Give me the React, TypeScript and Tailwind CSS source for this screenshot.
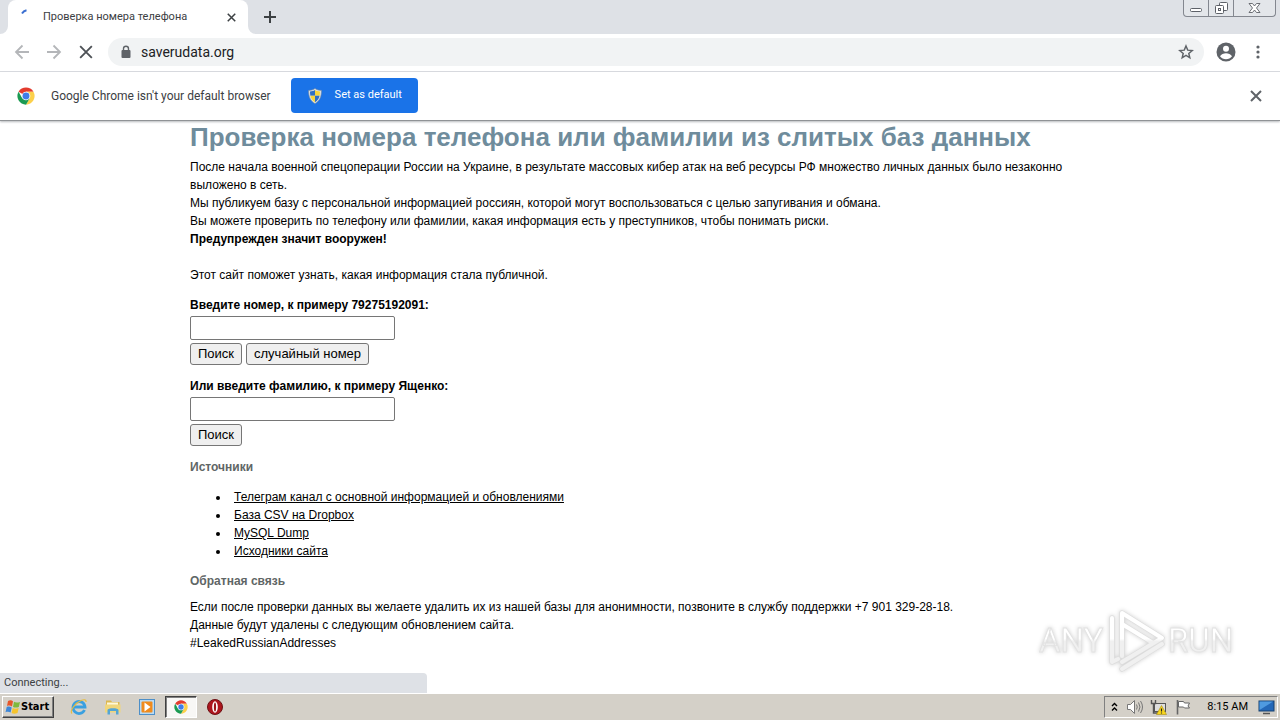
import React from "react";

const SOURCES = [
  "Телеграм канал с основной информацией и обновлениями",
  "База CSV на Dropbox",
  "MySQL Dump",
  "Исходники сайта",
];

const UI_FONT = "font-['Roboto','DejaVu_Sans',sans-serif]";

function ChromeLogo({ size }: { size: number }) {
  return (
    <svg width={size} height={size} viewBox="0 0 48 48" aria-hidden="true">
      <path d="M24 24L4.100 12.500A23 23 0 0 1 43.900 12.500H24z" fill="#e33b2e" />
      <path d="M24 12.500h19.900A23 23 0 0 1 24 47l10-17.200z" fill="#fcd04b" />
      <path d="M4.100 12.500L14 29.800 34 29.800 24 47A23 23 0 0 1 4.100 12.500z" fill="#1b9a52" />
      <circle cx="24" cy="24" r="11.5" fill="#fff" />
      <circle cx="24" cy="24" r="9.300" fill="#3f7de8" />
    </svg>
  );
}

function CloseIcon({ size, width = 2, color = "#5f6368" }: { size: number; width?: number; color?: string }) {
  return (
    <svg width={size} height={size} viewBox="0 0 12 12" stroke={color} strokeWidth={width} aria-hidden="true">
      <path d="M1 1l10 10M11 1L1 11" />
    </svg>
  );
}

function ShieldIcon() {
  return (
    <svg width="16" height="16" viewBox="0 0 16 16" aria-hidden="true">
      <path d="M8 0.500C10 2 12 2.400 14.400 2.400c0 6-1.400 10.200-6.400 13.100C3 12.600 1.600 8.400 1.600 2.400 4 2.400 6 2 8 .5z" fill="#dfe5ea" stroke="#7d8b99" strokeWidth="0.6" />
      <path d="M8 2C6.400 3 5 3.400 3 3.500c0 1.700.1 3 .4 4.300H8z" fill="#2f6fc4" />
      <path d="M8 2c1.600 1 3 1.400 5 1.500 0 1.700-.1 3-.4 4.300H8z" fill="#f8d53a" />
      <path d="M3.400 7.800C4 10.600 5.500 12.700 8 14.200V7.800z" fill="#f8d53a" />
      <path d="M12.600 7.800c-.6 2.800-2.100 4.900-4.600 6.400V7.800z" fill="#2f6fc4" />
    </svg>
  );
}

function TabStrip() {
  return (
    <div className="relative flex h-[34px] items-stretch bg-[#dee1e6] pl-2">
      <div className="relative flex w-60 items-center rounded-t-lg bg-white pr-2 pl-3">
        <svg className="absolute bottom-0 -left-2" width="8" height="8" aria-hidden="true">
          <path d="M8 0v8H0a8 8 0 0 0 8-8z" fill="#fff" />
        </svg>
        <svg className="absolute -right-2 bottom-0" width="8" height="8" aria-hidden="true">
          <path d="M0 0v8h8a8 8 0 0 1-8-8z" fill="#fff" />
        </svg>
        <svg width="16" height="16" viewBox="0 0 16 16" fill="none" aria-hidden="true">
          <path d="M2 4.500A7 7 0 0 1 6.500 1.300" stroke="#3b6fd1" strokeWidth="2" />
        </svg>
        <span className="ml-[7px] flex-1 text-[11px] whitespace-nowrap text-[#3c4043]">Проверка номера телефона</span>
        <button type="button" aria-label="Close tab" className="p-1">
          <CloseIcon size={9} width={2} color="#3c4043" />
        </button>
      </div>
      <button type="button" aria-label="New tab" className="ml-4 flex items-center">
        <svg width="12" height="34" viewBox="0 0 12 34" stroke="#3c4043" strokeWidth="2" aria-hidden="true">
          <path d="M6 11v12M0 17h12" />
        </svg>
      </button>
      <div className="mr-1 ml-auto flex h-[17px] overflow-hidden rounded-b border border-t-0 border-[#83878f] bg-[#e3e6ea]">
        <button type="button" aria-label="Minimize" className="flex w-[25px] items-center justify-center border-r border-[#83878f]">
          <svg width="12" height="16" viewBox="0 0 12 16" fill="#fff" stroke="#5d6168" aria-hidden="true">
            <rect x="0.5" y="8.500" width="11" height="3" rx="1" />
          </svg>
        </button>
        <button type="button" aria-label="Restore" className="flex w-[25px] items-center justify-center border-r border-[#83878f]">
          <svg width="13" height="16" viewBox="0 0 13 16" fill="#fff" stroke="#5d6168" aria-hidden="true">
            <rect x="4.500" y="2.500" width="8" height="8" rx="1" />
            <rect x="0.500" y="5.500" width="8" height="8" rx="1" />
            <rect x="3.500" y="8.500" width="2" height="2" />
          </svg>
        </button>
        <button type="button" aria-label="Close window" className="flex w-[41px] items-center justify-center">
          <svg width="13" height="16" viewBox="0 0 13 16" fill="#fff" stroke="#5d6168" strokeWidth="0.900" aria-hidden="true">
            <path d="M1 3.500h3.500l2 2.500 2-2.500H12L8.500 8l3.500 4.500H8.500l-2-2.500-2 2.500H1L4.500 8z" />
          </svg>
        </button>
      </div>
    </div>
  );
}

function Toolbar() {
  return (
    <div className="flex h-[38px] items-center border-b border-[#dadce0] bg-white pr-5 pb-px pl-3.5">
      <button type="button" aria-label="Back" className="mr-4">
        <svg width="16" height="16" viewBox="0 0 16 16" fill="none" stroke="#b4b6b9" strokeWidth="1.800" aria-hidden="true">
          <path d="M15 8H2M8.500 1.500L2 8l6.500 6.500" />
        </svg>
      </button>
      <button type="button" aria-label="Forward" className="mr-4">
        <svg width="16" height="16" viewBox="0 0 16 16" fill="none" stroke="#b4b6b9" strokeWidth="1.800" aria-hidden="true">
          <path d="M1 8h13M7.500 1.500L14 8l-6.500 6.500" />
        </svg>
      </button>
      <button type="button" aria-label="Stop loading" className="mr-3.5 flex w-4 justify-center">
        <CloseIcon size={14} width={1.6} color="#4d5156" />
      </button>
      <div className="flex h-7 flex-1 items-center rounded-full bg-[#f1f3f4] pr-2.5 pl-3">
        <svg width="12" height="14" viewBox="0 0 12 14" aria-hidden="true">
          <rect x="1.500" y="5" width="9" height="8" rx="1" fill="#5f6368" />
          <path d="M3.500 5.500V3.700a2.500 2.500 0 0 1 5 0v1.800" fill="none" stroke="#5f6368" strokeWidth="1.400" />
        </svg>
        <input
          type="text"
          aria-label="Address"
          defaultValue="saverudata.org"
          className="ml-[9px] min-w-0 flex-1 bg-transparent text-sm text-[#202124] outline-none"
        />
        <button type="button" aria-label="Bookmark this page">
          <svg width="16" height="16" viewBox="0 0 24 24" fill="none" stroke="#5f6368" strokeWidth="2.200" aria-hidden="true">
            <path d="M12 3l2.600 6.200 6.700.6-5.100 4.400 1.500 6.500L12 17.200l-5.700 3.500 1.500-6.500-5.100-4.400 6.700-.6z" />
          </svg>
        </button>
      </div>
      <button type="button" aria-label="Profile" className="ml-3">
        <svg width="20" height="20" viewBox="0 0 20 20" aria-hidden="true">
          <circle cx="10" cy="10" r="9.500" fill="#5f6368" />
          <circle cx="10" cy="6.800" r="3" fill="#fff" />
          <path d="M4 14.200c1.100-1.900 3.700-2.900 6-2.900s4.900 1 6 2.900a7.300 7.300 0 0 1-12 0z" fill="#fff" />
        </svg>
      </button>
      <button type="button" aria-label="Menu" className="ml-5">
        <svg width="4" height="16" viewBox="0 0 4 16" fill="#5f6368" aria-hidden="true">
          <circle cx="2" cy="3" r="1.600" />
          <circle cx="2" cy="8" r="1.600" />
          <circle cx="2" cy="13" r="1.600" />
        </svg>
      </button>
    </div>
  );
}

function InfoBar() {
  return (
    <div className="relative z-10 flex h-[49px] items-center border-b border-[#909396] bg-white pr-[18px] pb-px pl-[17px] shadow-[0_1px_2px_#b8babd]">
      <ChromeLogo size={18} />
      <span className="ml-4 text-[12px] whitespace-nowrap text-[#3c4043]">Google Chrome isn't your default browser</span>
      <button type="button" className="ml-5 flex h-[35px] items-center rounded bg-[#1a73e8] px-4 text-[11px] text-white">
        <ShieldIcon />
        <span className="ml-3">Set as default</span>
      </button>
      <button type="button" aria-label="Dismiss" className="ml-auto">
        <CloseIcon size={12} width={2} />
      </button>
    </div>
  );
}

function SearchForm({ id, label, random }: { id: string; label: string; random?: boolean }) {
  const button = "h-[22px] rounded-[3px] border border-[#767676] bg-[#efefef] px-[7px] text-[13px] leading-5";
  return (
    <form className="mt-3" onSubmit={(e) => e.preventDefault()}>
      <label htmlFor={id} className="block font-bold">{label}</label>
      <input id={id} type="text" className="mt-0.5 block h-6 w-[205px] rounded-[2px] border border-[#767676] bg-white px-1" />
      <div className="mt-[3px] flex gap-1">
        <button type="submit" className={button}>Поиск</button>
        {random && <button type="button" className={button}>случайный номер</button>}
      </div>
    </form>
  );
}

function Watermark() {
  return (
    <svg
      className="absolute right-11 bottom-5 drop-shadow-[0_0_2px_#00000030]"
      width="200"
      height="66"
      viewBox="0 0 200 66"
      role="img"
      aria-label="ANY RUN"
    >
      <defs>
        <linearGradient id="mark" gradientUnits="userSpaceOnUse" x1="0" y1="0" x2="0" y2="66">
          <stop offset="0.48" stopColor="#fff" />
          <stop offset="0.52" stopColor="#f0f0f0" />
        </linearGradient>
      </defs>
      <g fill="url(#mark)" fontFamily="Roboto,'Liberation Sans',sans-serif" fontSize="33" stroke="#e2e2e2" strokeWidth="0.800">
        <text x="3" y="45">ANY</text>
        <text x="132" y="45">RUN</text>
      </g>
      <g fill="none" strokeLinejoin="round" strokeLinecap="round">
        <path d="M86 49V6l40 25-40 24M86 17l31 19M86 62l40-25M76 11v44l6-3" stroke="#dedede" strokeWidth="5.500" />
        <path d="M86 49V6l40 25-40 24M86 17l31 19M86 62l40-25M76 11v44l6-3" stroke="url(#mark)" strokeWidth="4" />
      </g>
    </svg>
  );
}

function PageContent() {
  return (
    <main className="relative flex-1 bg-white pt-px font-['Liberation_Sans',sans-serif] text-[12px] leading-[18px] text-black">
      <div className="mx-auto max-w-[900px]">
        <h1 className="text-[26px] leading-[30px] font-bold text-[#6f8c9c]">
          Проверка номера телефона или фамилии из слитых баз данных
        </h1>
        <p className="mt-1.5">
          После начала военной спецоперации России на Украине, в результате массовых кибер атак на веб ресурсы РФ множество личных данных было незаконно
          <br />
          выложено в сеть.
          <br />
          Мы публикуем базу с персональной информацией россиян, которой могут воспользоваться с целью запугивания и обмана.
          <br />
          Вы можете проверить по телефону или фамилии, какая информация есть у преступников, чтобы понимать риски.
          <br />
          <b>Предупрежден значит вооружен!</b>
          <br />
          <br />
          Этот сайт поможет узнать, какая информация стала публичной.
        </p>
        <SearchForm id="phone" label="Введите номер, к примеру 79275192091:" random />
        <SearchForm id="surname" label="Или введите фамилию, к примеру Ященко:" />
        <h2 className="mt-3 font-bold text-[#5f6666]">Источники</h2>
        <ul className="mt-3 list-disc pl-10">
          {SOURCES.map((name) => (
            <li key={name} className="pl-1">
              <a href="#" className="underline">{name}</a>
            </li>
          ))}
        </ul>
        <h2 className="mt-3 font-bold text-[#5f6666]">Обратная связь</h2>
        <p className="mt-2">
          Если после проверки данных вы желаете удалить их из нашей базы для анонимности, позвоните в службу поддержки +7 901 329-28-18.
          <br />
          Данные будут удалены с следующим обновлением сайта.
          <br />
          #LeakedRussianAddresses
        </p>
      </div>
      <Watermark />
      <div className={`absolute bottom-0 left-0 h-5 w-1/3 rounded-tr bg-[#dee1e6] pl-1 text-[11px] leading-5 text-[#3c4043] ${UI_FONT}`}>
        Connecting...
      </div>
    </main>
  );
}

function Taskbar() {
  const item = "flex h-[22px] w-8 items-center justify-center";
  return (
    <footer className="flex h-[27px] items-center border-t border-white bg-[#d4d0c8] pr-0.5 pl-0.5 text-[11px] text-black">
      <button
        type="button"
        className="flex h-[22px] items-center border border-t-white border-r-[#404040] border-b-[#404040] border-l-white pr-1 pl-0.5 font-['DejaVu_Sans_Condensed','DejaVu_Sans',sans-serif] text-[11px] font-bold shadow-[inset_-1px_-1px_#808080]"
      >
        <svg width="16" height="16" viewBox="0 0 16 16" aria-hidden="true">
          <path d="M3 2c2-1 3.500-.8 5 .3L7 7.500C5.500 6.500 4 6.300 2 7z" fill="#e6562a" />
          <path d="M9 2.800c1.500 1 3.500 1 6 .2l-1.200 5c-2 .8-4 .9-5.800-.1z" fill="#7fb93d" />
          <path d="M1.700 8C3.500 7.300 5.200 7.500 6.700 8.500L5.600 13.600C4.200 12.600 2.500 12.400.5 13.200z" fill="#3d87d8" />
          <path d="M7.700 9c1.700 1 3.700 1 6 .1l-1.200 5c-2.200.8-4.200.8-5.900-.1z" fill="#f6c42d" />
        </svg>
        <span>Start</span>
      </button>
      <div className="ml-[9px] flex items-center gap-0.5">
        <button type="button" aria-label="Internet Explorer" className={item}>
          <svg width="18" height="18" viewBox="0 0 18 18" fill="none" aria-hidden="true">
            <path d="M14.500 12A6 6 0 1 1 15 9H4" stroke="#3aa0e0" strokeWidth="2.800" />
            <path d="M2 15.500C-.5 13 5 5 11 2.500c3-1.300 5.500-1 5 1.500" stroke="#e5bc43" strokeWidth="1.200" />
          </svg>
        </button>
        <button type="button" aria-label="Explorer" className={item}>
          <svg width="18" height="18" viewBox="0 0 18 18" aria-hidden="true">
            <path d="M2 2.500h5l1 1.500h7.500V14H2z" fill="#dcb850" />
            <path d="M3 4.500h11V8H3z" fill="#fff8d8" />
            <path d="M1 6.500h15.500v8H1z" fill="#f0d67c" />
            <path d="M3.500 16.500v-4.500c0-2.500 11-2.500 11 0v4.500H12v-3.500H6v3.500z" fill="#55a5d4" />
          </svg>
        </button>
        <button type="button" aria-label="Media Player" className={item}>
          <svg width="16" height="16" viewBox="0 0 16 16" aria-hidden="true">
            <rect x="0.500" y="0.500" width="15" height="15" fill="#b9daf3" stroke="#4d8fc8" />
            <rect x="2.500" y="2.500" width="11" height="11" rx="1" fill="#f08b1d" />
            <path d="M5.500 3.500l6 4.500-6 4.500z" fill="#fff" />
          </svg>
        </button>
        <button
          type="button"
          aria-label="Google Chrome"
          className={`${item} border-t-[#404040] border-r-white border-b-white border-l-[#404040] border bg-[#f8f7f5] shadow-[inset_1px_1px_#808080]`}
        >
          <ChromeLogo size={14} />
        </button>
        <button type="button" aria-label="Opera" className={item}>
          <svg width="16" height="16" viewBox="0 0 16 16" aria-hidden="true">
            <circle cx="8" cy="8" r="7.500" fill="#ad151d" stroke="#6d1114" />
            <ellipse cx="8" cy="8" rx="2.800" ry="5.800" fill="#fff" />
            <ellipse cx="8" cy="8" rx="1.100" ry="4.600" fill="#9c1518" />
          </svg>
        </button>
      </div>
      <div className="ml-auto flex h-[22px] items-center border border-t-[#808080] border-r-white border-b-white border-l-[#808080] pr-0.5 pl-1.5">
        <button type="button" aria-label="Show hidden icons">
          <svg width="7" height="10" viewBox="0 0 7 10" fill="none" stroke="#000" strokeWidth="1.400" aria-hidden="true">
            <path d="M1 4l2.500-2.500L6 4M1 8.500L3.500 6 6 8.500" />
          </svg>
        </button>
        <svg className="ml-2" width="18" height="16" viewBox="0 0 18 16" fill="none" stroke="#777" aria-hidden="true">
          <path d="M1.500 5.500h3l4-4v13l-4-4h-3z" fill="#fff" />
          <path d="M10.500 5.500q1.500 2.500 0 5M12.500 3.500q3 4.500 0 9M14.500 2q4 6 0 12" />
        </svg>
        <svg className="ml-1.5" width="17" height="16" viewBox="0 0 17 16" aria-hidden="true">
          <rect x="4.500" y="4.500" width="11" height="8" fill="#ddd" stroke="#555" />
          <path d="M1.500 1v3.500h4V1M3.500 4.500V14h5" fill="none" stroke="#555" strokeWidth="1.400" />
          <path d="M11.500 6.500l5 9h-10z" fill="#f8d61c" stroke="#a88d10" strokeWidth="0.600" />
          <path d="M11.500 9.500v3M11.500 13.500v1" stroke="#222" strokeWidth="1.200" />
        </svg>
        <svg className="ml-2" width="16" height="16" viewBox="0 0 16 16" fill="#fff" stroke="#666" aria-hidden="true">
          <path d="M2.500 1v14.500" strokeWidth="1.600" />
          <path d="M3.500 2.500h5l1 1.500h5l-1.500 3 1.500 2h-5l-1-1h-5z" />
        </svg>
        <time className="ml-4">8:15 AM</time>
        <svg className="ml-2.5" width="17" height="15" viewBox="0 0 17 15" aria-hidden="true">
          <rect x="1" y="1" width="15" height="10" fill="#2468b8" stroke="#17406f" />
          <path d="M1.500 10L15 1.500H1.500z" fill="#4f9ae0" />
          <path d="M5 13.500h7" stroke="#555" strokeWidth="1.500" />
        </svg>
      </div>
    </footer>
  );
}

export default function App() {
  return (
    <div className={`flex min-h-screen flex-col bg-white ${UI_FONT}`}>
      <TabStrip />
      <Toolbar />
      <InfoBar />
      <PageContent />
      <Taskbar />
    </div>
  );
}
